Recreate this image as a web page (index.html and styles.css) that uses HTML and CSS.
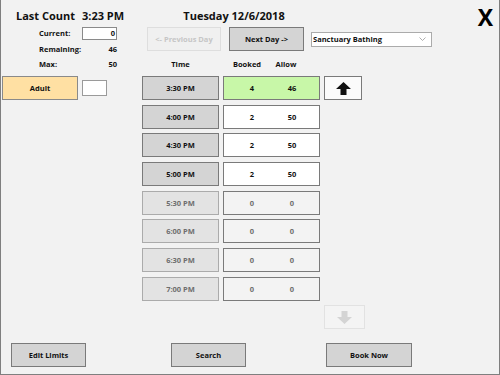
FILE: index.html
```html
<!DOCTYPE html>
<html>
<head>
  <title>Booking Counts</title>
  <link rel="stylesheet" href="styles.css">
</head>
<body>
  <div class="screen">
    <div class="count-title"><span class="count-label">Last Count</span><span>3:23 PM</span></div>
    <div class="date">Tuesday 12/6/2018</div>
    <div class="close">X</div>

    <div class="counts">
      <span>Current:</span><span class="count-box">0</span>
      <span>Remaining:</span><span class="count-val">46</span>
      <span>Max:</span><span class="count-val">50</span>
    </div>

    <div class="nav">
      <button class="btn btn-prev" disabled>&lt;- Previous Day</button>
      <button class="btn btn-next">Next Day -&gt;</button>
      <div class="picker">
        <span>Sanctuary Bathing</span>
        <svg width="7" height="4" viewBox="0 0 7 4"><path d="M0.5 0.5 L3.5 3.5 L6.5 0.5" fill="none" stroke="#999" stroke-width="0.8"/></svg>
      </div>
    </div>

    <div class="hdr-time">Time</div>
    <div class="hdr-data"><span>Booked</span><span>Allow</span></div>

    <div class="adult">
      <button class="btn btn-adult">Adult</button>
      <span class="adult-box"></span>
    </div>

    <div class="slots">
      <button class="btn arrow arrow-up">
        <svg width="15" height="13" viewBox="0 0 15 13"><path d="M7.5 0 L15 7 L10.5 7 L10.5 13 L4.5 13 L4.5 7 L0 7 Z" fill="#111"/></svg>
      </button>
      <button class="btn arrow arrow-down" disabled>
        <svg width="15" height="13" viewBox="0 0 15 13"><path d="M7.5 13 L15 6 L10.5 6 L10.5 0 L4.5 0 L4.5 6 L0 6 Z" fill="#d4d4d4"/></svg>
      </button>

      <button class="btn time">3:30 PM</button>
      <div class="data data-sel"><span>4</span><span>46</span></div>
      <button class="btn time">4:00 PM</button>
      <div class="data"><span>2</span><span>50</span></div>
      <button class="btn time">4:30 PM</button>
      <div class="data"><span>2</span><span>50</span></div>
      <button class="btn time">5:00 PM</button>
      <div class="data"><span>2</span><span>50</span></div>
      <button class="btn time off">5:30 PM</button>
      <div class="data off"><span>0</span><span>0</span></div>
      <button class="btn time off">6:00 PM</button>
      <div class="data off"><span>0</span><span>0</span></div>
      <button class="btn time off">6:30 PM</button>
      <div class="data off"><span>0</span><span>0</span></div>
      <button class="btn time off">7:00 PM</button>
      <div class="data off"><span>0</span><span>0</span></div>
    </div>

    <div class="footer">
      <button class="btn btn-edit">Edit Limits</button>
      <button class="btn btn-search">Search</button>
      <button class="btn btn-book">Book Now</button>
    </div>
  </div>
</body>
</html>
```

FILE: styles.css
```css
* {
  box-sizing: border-box;
}

body {
  margin: 0;
  font-family: "Open Sans", "Noto Sans", sans-serif;
  font-weight: 700;
  color: #111;
}

.screen {
  width: 500px;
  height: 375px;
  background: #f2f2f2;
  border: 1px solid #7f7f7f;
  border-top: 0;
  display: grid;
  grid-template-columns: 137px 77px 97px 1fr;
  grid-template-rows: 24px 27px 25px auto 1fr auto;
  column-gap: 4px;
}

.btn {
  font: inherit;
  font-size: 7.5px;
  color: #111;
  background: #d4d4d4;
  border: 1px solid #7a7a7a;
  padding: 0;
  height: 24px;
}

/* header */

.count-title {
  grid-column: 1;
  grid-row: 1;
  display: flex;
  padding: 8px 0 0 15px;
  font-size: 11px;
  line-height: 15px;
}

.count-label {
  width: 66px;
}

.date {
  grid-column: 2 / 4;
  grid-row: 1;
  padding: 8px 0 0 6px;
  text-align: center;
  font-size: 11px;
  line-height: 15px;
}

.close {
  grid-column: 4;
  grid-row: 1 / 3;
  justify-self: end;
  align-self: start;
  margin: 5px 6px 0 0;
  font-size: 23px;
  line-height: 24px;
  color: #000;
}

/* counts */

.counts {
  grid-column: 1;
  grid-row: 2 / 4;
  display: grid;
  grid-template-columns: 43px 35px;
  grid-auto-rows: 15.5px;
  align-items: center;
  align-content: start;
  padding: 1.5px 0 0 38px;
  font-size: 7.5px;
}

.count-box {
  height: 12.5px;
  background: #fff;
  border: 1px solid #8a8a8a;
  text-align: right;
  padding-right: 1px;
  line-height: 10px;
}

.count-val {
  text-align: right;
}

.adult {
  grid-column: 1;
  grid-row: 4;
  align-self: start;
  display: flex;
  align-items: center;
  gap: 4px;
  padding-left: 1px;
}

.btn-adult {
  width: 76px;
  background: #ffe0a3;
  border-color: #8a8a8a;
}

.adult-box {
  width: 25px;
  height: 16px;
  background: #fff;
  border: 1px solid #9a9a9a;
}

/* day navigation */

.nav {
  grid-column: 2 / 5;
  grid-row: 2;
  display: flex;
  align-items: center;
  padding-top: 3px;
}

.btn-prev {
  width: 74px;
  margin-left: 5px;
  background: #f0f0f0;
  border-color: #dedede;
  color: #c6c6c6;
}

.btn-next {
  width: 75px;
  margin-left: 8px;
}

.picker {
  width: 121px;
  height: 15px;
  margin-left: 7px;
  background: #fff;
  border: 1px solid #ababab;
  display: flex;
  align-items: center;
  justify-content: space-between;
  padding: 0 5px 0 1px;
  font-size: 7.5px;
}

/* slot table */

.hdr-time {
  grid-column: 2;
  grid-row: 3;
  align-self: center;
  text-align: center;
  font-size: 7.5px;
}

.hdr-data {
  grid-column: 3;
  grid-row: 3;
  align-self: center;
  display: grid;
  grid-template-columns: 48px 30px;
  text-align: center;
  font-size: 7.5px;
}

.slots {
  grid-column: 2 / 5;
  grid-row: 4;
  display: grid;
  grid-template-columns: 77px 97px 38px;
  grid-template-rows: repeat(9, 24px);
  column-gap: 4px;
  row-gap: 4.67px;
}

.time {
  grid-column: 1;
}

.time.off {
  background: #e3e3e3;
  border-color: #ababab;
  color: #6e6e6e;
}

.data {
  grid-column: 2;
  display: grid;
  grid-template-columns: 40px 40px;
  align-items: center;
  padding-left: 8px;
  background: #fff;
  border: 1px solid #7a7a7a;
  text-align: center;
  font-size: 7.5px;
}

.data-sel {
  background: #c8f7a8;
}

.data.off {
  background: #f3f3f3;
  color: #6e6e6e;
}

.arrow {
  display: flex;
  align-items: center;
  justify-content: center;
  background: #fbfbfb;
}

.arrow-up {
  grid-column: 3;
  grid-row: 1;
  width: 38px;
}

.arrow-down {
  grid-column: 3;
  grid-row: 9;
  width: 41px;
  background: #f4f4f4;
  border-color: #e2e2e2;
}

/* footer */

.footer {
  grid-column: 1 / -1;
  grid-row: 6;
  display: flex;
  padding: 0 0 7px 10px;
}

.btn-edit {
  width: 75px;
}

.btn-search {
  width: 75px;
  margin-left: 85px;
}

.btn-book {
  width: 86px;
  margin-left: 80px;
}
```
